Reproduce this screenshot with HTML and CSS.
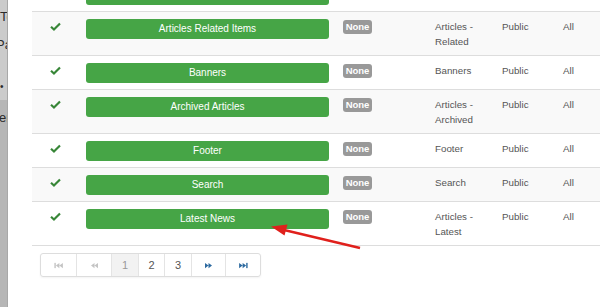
FILE: index.html
```html
<!DOCTYPE html>
<html lang="en">
<head>
    <meta charset="UTF-8">
    <title>Modules</title>
    <link rel="stylesheet" href="styles.css">
</head>
<body>
    <div class="sidebar">
        <div class="side-top">
            <div class="side-item side-to">To</div>
            <div class="side-item side-pa">Pa</div>
            <div class="side-item side-dot">&bull;</div>
        </div>
        <div class="side-item side-er">er</div>
    </div>

    <div class="main">
        <table class="modules">
            <colgroup>
                <col class="c-check">
                <col class="c-title">
                <col class="c-pos">
                <col class="c-page">
                <col class="c-access">
                <col class="c-lang">
            </colgroup>
            <tbody>
                <tr>
                    <td class="check"></td>
                    <td><span class="btn-module">Most Read Articles</span></td>
                    <td class="pos"></td>
                    <td></td>
                    <td></td>
                    <td></td>
                </tr>
                <tr>
                    <td class="check"><svg viewBox="0 0 12 10" class="icon-check"><path d="M1 5.2 L4.3 8.3 L11 1.6" /></svg></td>
                    <td><span class="btn-module">Articles Related Items</span></td>
                    <td class="pos"><span class="badge">None</span></td>
                    <td>Articles - Related</td>
                    <td>Public</td>
                    <td>All</td>
                </tr>
                <tr>
                    <td class="check"><svg viewBox="0 0 12 10" class="icon-check"><path d="M1 5.2 L4.3 8.3 L11 1.6" /></svg></td>
                    <td><span class="btn-module">Banners</span></td>
                    <td class="pos"><span class="badge">None</span></td>
                    <td>Banners</td>
                    <td>Public</td>
                    <td>All</td>
                </tr>
                <tr>
                    <td class="check"><svg viewBox="0 0 12 10" class="icon-check"><path d="M1 5.2 L4.3 8.3 L11 1.6" /></svg></td>
                    <td><span class="btn-module">Archived Articles</span></td>
                    <td class="pos"><span class="badge">None</span></td>
                    <td>Articles - Archived</td>
                    <td>Public</td>
                    <td>All</td>
                </tr>
                <tr>
                    <td class="check"><svg viewBox="0 0 12 10" class="icon-check"><path d="M1 5.2 L4.3 8.3 L11 1.6" /></svg></td>
                    <td><span class="btn-module">Footer</span></td>
                    <td class="pos"><span class="badge">None</span></td>
                    <td>Footer</td>
                    <td>Public</td>
                    <td>All</td>
                </tr>
                <tr>
                    <td class="check"><svg viewBox="0 0 12 10" class="icon-check"><path d="M1 5.2 L4.3 8.3 L11 1.6" /></svg></td>
                    <td><span class="btn-module">Search</span></td>
                    <td class="pos"><span class="badge">None</span></td>
                    <td>Search</td>
                    <td>Public</td>
                    <td>All</td>
                </tr>
                <tr>
                    <td class="check"><svg viewBox="0 0 12 10" class="icon-check"><path d="M1 5.2 L4.3 8.3 L11 1.6" /></svg></td>
                    <td><span class="btn-module">Latest News</span></td>
                    <td class="pos"><span class="badge">None</span></td>
                    <td>Articles - Latest</td>
                    <td>Public</td>
                    <td>All</td>
                </tr>
            </tbody>
        </table>

        <ul class="pagination">
            <li class="disabled w35"><svg viewBox="0 0 10 8"><rect x="0.3" y="1" width="1.6" height="6"/><path d="M2 4 L6 1 V7 Z M6 4 L10 1 V7 Z"/></svg></li>
            <li class="disabled w35"><svg viewBox="0 0 8 8"><path d="M0 4 L4 1 V7 Z M4 4 L8 1 V7 Z"/></svg></li>
            <li class="active w27">1</li>
            <li class="w26">2</li>
            <li class="w27">3</li>
            <li class="link w34"><svg viewBox="0 0 8 8"><path d="M8 4 L4 1 V7 Z M4 4 L0 1 V7 Z"/></svg></li>
            <li class="link w35"><svg viewBox="0 0 10 8"><path d="M8 4 L4 1 V7 Z M4 4 L0 1 V7 Z"/><rect x="8.1" y="1" width="1.6" height="6"/></svg></li>
        </ul>
    </div>

    <svg class="arrow" viewBox="0 0 600 307">
        <line x1="360" y1="248" x2="282" y2="229.5" />
        <polygon points="271,226.5 287.5,224.5 284.5,235.5" />
    </svg>
</body>
</html>
```

FILE: styles.css
```css
body {
    margin: 0;
    font-family: "Liberation Sans", Arial, sans-serif;
    font-size: 9.75px;
    line-height: 15px;
    color: #555;
    background-color: #fff;
    display: flex;
    height: 307px;
    overflow: hidden;
}
.sidebar {
    width: 7px;
    flex-shrink: 0;
    background-color: #b6b6b6;
    border-right: 1px solid #a8a8a8;
    overflow: hidden;
    color: #2a2a2a;
    font-size: 13px;
    line-height: 16px;
}
.side-top {
    background-color: #cbcbcb;
    height: 100px;
}
.side-item {
    white-space: nowrap;
}
.side-to {
    padding-top: 9px;
}
.side-pa {
    margin-top: 12px;
    margin-left: -4px;
}
.side-dot {
    margin-top: 26px;
    font-size: 10px;
}
.side-er {
    margin-top: 10px;
    margin-left: -1px;
}
.main {
    flex: 1;
    padding-left: 24px;
    overflow: hidden;
}
.modules {
    width: 640px;
    table-layout: fixed;
    border-collapse: collapse;
    margin-top: -23px;
}
.c-check { width: 46px; }
.c-title { width: 259px; }
.c-pos { width: 90px; }
.c-page { width: 67px; }
.c-access { width: 61px; }
.c-lang { width: 117px; }
.modules td {
    padding: 7px 8px 6px;
    vertical-align: top;
    border-top: 1px solid #ddd;
}
.modules tr:nth-child(even) td {
    background-color: #f9f9f9;
}
.modules tr:last-child td {
    border-bottom: 1px solid #ddd;
}
.modules td.check {
    text-align: center;
    padding-left: 0;
    padding-right: 0;
}
.modules td.pos {
    padding-left: 6px;
}
.icon-check {
    width: 11px;
    height: 9px;
    margin-top: 3px;
    display: inline-block;
    vertical-align: top;
}
.icon-check path {
    fill: none;
    stroke: #378637;
    stroke-width: 2.4;
}
.btn-module {
    display: block;
    height: 20px;
    line-height: 20px;
    background-color: #46a546;
    border-radius: 3px;
    color: #fff;
    text-align: center;
    font-size: 10px;
}
.badge {
    display: inline-block;
    width: 29px;
    height: 14px;
    line-height: 14px;
    background-color: #999;
    border-radius: 3px;
    color: #fff;
    font-weight: bold;
    font-size: 9.5px;
    text-align: center;
}
.pagination {
    list-style: none;
    margin: 7px 0 0 8px;
    padding: 0;
    display: inline-flex;
    border: 1px solid #ddd;
    border-radius: 3px;
    box-shadow: 0 1px 2px rgba(0, 0, 0, 0.05);
}
.pagination li {
    box-sizing: border-box;
    height: 22px;
    display: flex;
    align-items: center;
    justify-content: center;
    border-left: 1px solid #e4e4e4;
    color: #555;
    font-size: 11px;
}
.pagination li:first-child {
    border-left: none;
}
.pagination li svg {
    height: 7px;
}
.pagination li.disabled svg {
    fill: #c4c4c4;
    width: 9px;
}
.pagination li.link svg {
    fill: #2d6aa0;
    width: 9px;
}
.pagination li.active {
    background-color: #f2f2f2;
    color: #999;
}
.w35 { width: 35px; }
.w34 { width: 34px; }
.w27 { width: 27px; }
.w26 { width: 26px; }
.arrow {
    position: absolute;
    left: 0;
    top: 0;
    width: 600px;
    height: 307px;
    pointer-events: none;
}
.arrow line {
    stroke: #e0201c;
    stroke-width: 2.5;
}
.arrow polygon {
    fill: #e0201c;
}
```
